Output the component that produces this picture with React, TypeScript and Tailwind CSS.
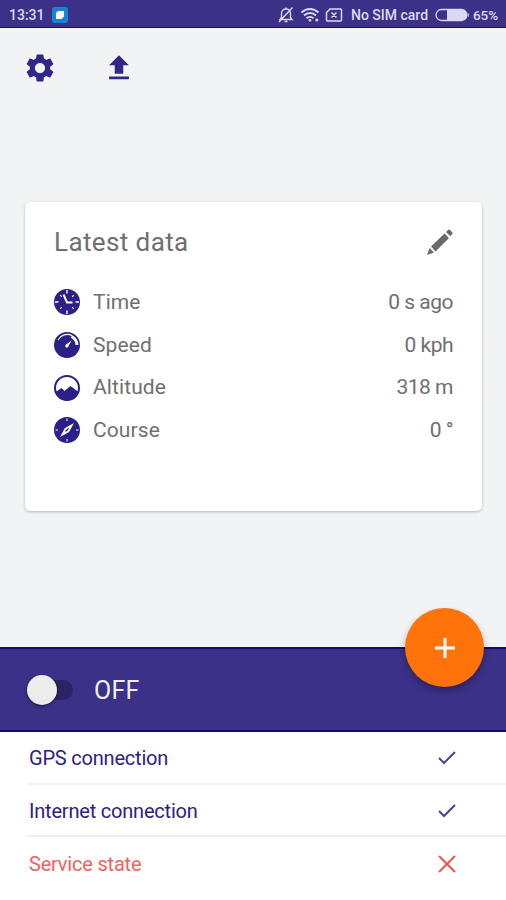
import { ReactNode } from 'react';
import { MdFileUpload, MdSettings } from 'react-icons/md';

const stats = [
  { icon: <TimeIcon />, label: 'Time', value: '0 s ago' },
  { icon: <SpeedIcon />, label: 'Speed', value: '0 kph' },
  { icon: <AltitudeIcon />, label: 'Altitude', value: '318 m' },
  { icon: <CourseIcon />, label: 'Course', value: '0 °' },
];

export default function App() {
  return (
    <div className="flex h-[900px] w-[506px] flex-col overflow-hidden bg-[#f1f3f5] font-['Roboto',sans-serif]">
      <StatusBar />
      <header className="flex h-[79px] shrink-0 items-center gap-[45px] pl-[23px] text-[#33268a]">
        <MdSettings size={34} />
        <MdFileUpload size={34} />
      </header>
      <main className="grow pt-[95px] pr-6 pl-[25px]">
        <LatestData />
      </main>
      <TrackingBar />
      <div className="h-[168px] shrink-0 bg-white pl-[28px]">
        <ConnectionRow label="GPS connection" ok />
        <ConnectionRow label="Internet connection" ok />
        <ConnectionRow label="Service state" last />
      </div>
    </div>
  );
}

function StatusBar() {
  return (
    <div className="flex h-7 shrink-0 items-center border-b border-[#170a75] bg-[#3c3189] pt-[2px] pl-[9px] text-[14px] font-medium text-[#dcd8f2]">
      <span className="w-[35px] pt-px">13:31</span>
      <div className="ml-[8px] flex size-4 items-center justify-center rounded-[3px] bg-[#1684d0]">
        <svg viewBox="0 0 8 8" className="size-2" fill="#fff">
          <path d="M2 0H8V5.5L5.5 8H0V2Z" />
        </svg>
      </div>
      <svg viewBox="0 0 18 18" className="ml-[209px] size-[18px]" fill="none" stroke="currentColor" strokeWidth="1.4">
        <path d="M3 13.5H15L13.5 11.5V7.5C13.5 4.8 11.7 3 9 3S4.500 4.800 4.500 7.500V11.500ZM9 1.500V3M7.500 15.500H10.500M15.500 1.500L2 16" />
      </svg>
      <svg viewBox="0 0 20 16" className="ml-[5px] h-4 w-5" fill="none" stroke="currentColor" strokeWidth="2">
        <path d="M1.500 5.500C6.500 .8 13.500 .8 18.500 5.500M4 8.500C7.500 5.300 12.500 5.300 16 8.500M6.500 11.300C8.500 9.500 11.500 9.500 13.500 11.300" />
        <circle cx="10" cy="13.200" r="1.300" fill="currentColor" stroke="none" />
        <circle cx="16.800" cy="13" r="1.600" fill="currentColor" stroke="none" />
      </svg>
      <svg viewBox="0 0 18 16" className="ml-[5px] h-4 w-[18px]" fill="none" stroke="currentColor" strokeWidth="1.500">
        <path d="M5 2H15.500Q16.500 2 16.500 3V13Q16.500 14 15.500 14H2.500Q1.500 14 1.500 13V5.500ZM6.500 5.500L11.500 10.500M11.500 5.500L6.500 10.500" />
      </svg>
      <span className="ml-[8px] w-[78px] pt-px whitespace-nowrap">No SIM card</span>
      <svg viewBox="0 0 35 14" className="ml-[6px] h-[14px] w-[35px]">
        <rect x="1" y="1.500" width="31" height="11" rx="5.500" fill="none" stroke="currentColor" strokeWidth="1.300" />
        <path d="M12 2H27Q32 2 32 7T27 12H12ZM33 5Q35 7 33 9Z" fill="currentColor" />
      </svg>
      <span className="ml-[3px] pt-px text-[13.500px] tracking-[-0.1px]">65%</span>
    </div>
  );
}

function LatestData() {
  return (
    <section className="h-[309px] rounded-[5px] bg-white px-[29px] pt-[21px] text-[#6f6f6f] shadow-[0_1px_3px_rgba(0,0,0,0.25)]">
      <div className="flex h-[38px] items-center justify-between">
        <h1 className="text-[26px] tracking-[0.4px]">Latest data</h1>
        <PencilIcon />
      </div>
      <ul className="mt-[20px]">
        {stats.map((stat) => (
          <StatRow key={stat.label} {...stat} />
        ))}
      </ul>
    </section>
  );
}

function StatRow({ icon, label, value }: { icon: ReactNode; label: string; value: string }) {
  return (
    <li className="flex h-[42.700px] items-center text-[21px]">
      {icon}
      <span className="ml-[13px] grow pt-px tracking-[0.1px]">{label}</span>
      <span className="pt-px tracking-[-0.5px]">{value}</span>
    </li>
  );
}

function TrackingBar() {
  return (
    <div className="relative flex h-[85px] shrink-0 items-center border-y-2 border-[#17087a] bg-[#3c3189] pl-[27px]">
      <button className="flex h-5 w-[46px] items-center rounded-full" aria-label="Tracking">
        <span className="z-10 size-[30px] shrink-0 rounded-full bg-[#ececec] shadow-[0_1px_3px_rgba(0,0,0,0.6)]" />
        <span className="-ml-[18px] h-5 w-[34px] shrink-0 rounded-full bg-[#2b2363]" />
      </button>
      <span className="ml-[21px] pt-[3px] text-[25px] tracking-[0.3px] text-[#f1effa]">OFF</span>
      <button
        className="absolute -top-[41px] left-[405px] flex size-[79px] items-center justify-center rounded-full bg-[#ff730a] shadow-[0_4px_7px_rgba(0,0,0,0.3)]"
        aria-label="Add"
      >
        <svg viewBox="0 0 20 20" className="size-5" stroke="#fff" strokeWidth="3">
          <path d="M10 0V20M0 10H20" />
        </svg>
      </button>
    </div>
  );
}

function ConnectionRow({ label, ok, last }: { label: string; ok?: boolean; last?: boolean }) {
  return (
    <div className={`flex items-center pt-[2px] pr-[50px] text-[20px] ${ok ? 'text-[#2d2187]' : 'text-[#f0625f]'} ${last ? 'h-[52px]' : 'h-[52.500px] border-b-2 border-[#f0f0f1]'}`}>
      <span className="ml-px grow tracking-[-0.2px]">{label}</span>
      <svg viewBox="0 0 18 18" className="size-[18px]" fill="none" stroke={ok ? '#4b4294' : '#ec5350'} strokeWidth="2">
        <path d={ok ? 'M1 9L6 14L17 3' : 'M1 1L17 17M17 1L1 17'} />
      </svg>
    </div>
  );
}

function PencilIcon() {
  return (
    <svg viewBox="0 0 26 26" className="size-[26px]" fill="#6a6a6a">
      <path d="M0 26L2.500 19L7 23.500ZM4 17.500L17.500 4.500L22 9L8.500 22.500ZM19 3L21 1Q22 0 23 1L25.200 3.200Q26 4 25.200 5L23.300 7.300Z" />
    </svg>
  );
}

function TimeIcon() {
  return (
    <svg viewBox="0 0 26 26" className="size-[26px]" fill="none" stroke="#fff">
      <circle cx="13" cy="13" r="13" fill="#2b2087" stroke="none" />
      <path d="M13 1V4.500M13 21.500V25M1 13H4.500M21.500 13H25" strokeWidth="1.400" />
      <path d="M6.200 6.200L7.800 7.800M18.200 7.800L19.800 6.200M6.200 19.800L7.800 18.200M18.200 18.200L19.800 19.800" strokeWidth="1.200" />
      <path d="M9.500 5.500L13 13.500H18.500" strokeWidth="1.900" />
    </svg>
  );
}

function SpeedIcon() {
  return (
    <svg viewBox="0 0 26 26" className="size-[26px]" fill="none" stroke="#fff">
      <circle cx="13" cy="13" r="13" fill="#2b2087" stroke="none" />
      <path d="M4 8A10.500 10.500 0 0 1 18 3.600" strokeWidth="1.300" />
      <path d="M17.500 4.500A10 10 0 0 1 23 13" strokeWidth="3" />
      <path d="M11.500 13L17.500 8.500L14 15Z" fill="#fff" stroke="none" />
      <circle cx="12.800" cy="14" r="1.500" fill="#fff" stroke="none" />
    </svg>
  );
}

function AltitudeIcon() {
  return (
    <svg viewBox="0 0 26 26" className="size-[26px]" fill="none">
      <circle cx="13" cy="13" r="12" stroke="#2b2087" strokeWidth="2" />
      <path d="M1.500 17L7.500 13L10.500 16L16.500 11L24.500 17A12 12 0 0 1 1.500 17Z" fill="#2b2087" />
    </svg>
  );
}

function CourseIcon() {
  return (
    <svg viewBox="0 0 26 26" className="size-[26px]" fill="none" stroke="#fff">
      <circle cx="13" cy="13" r="13" fill="#2b2087" stroke="none" />
      <path d="M13 1.500V4M13 22V24.500M1.500 13H4M22 13H24.500" />
      <path d="M20 6L15 15L6 20L11 11Z" fill="#fff" stroke="none" />
      <path d="M11.500 14.500L14.500 11.500" stroke="#2b2087" strokeWidth="1.200" />
    </svg>
  );
}
